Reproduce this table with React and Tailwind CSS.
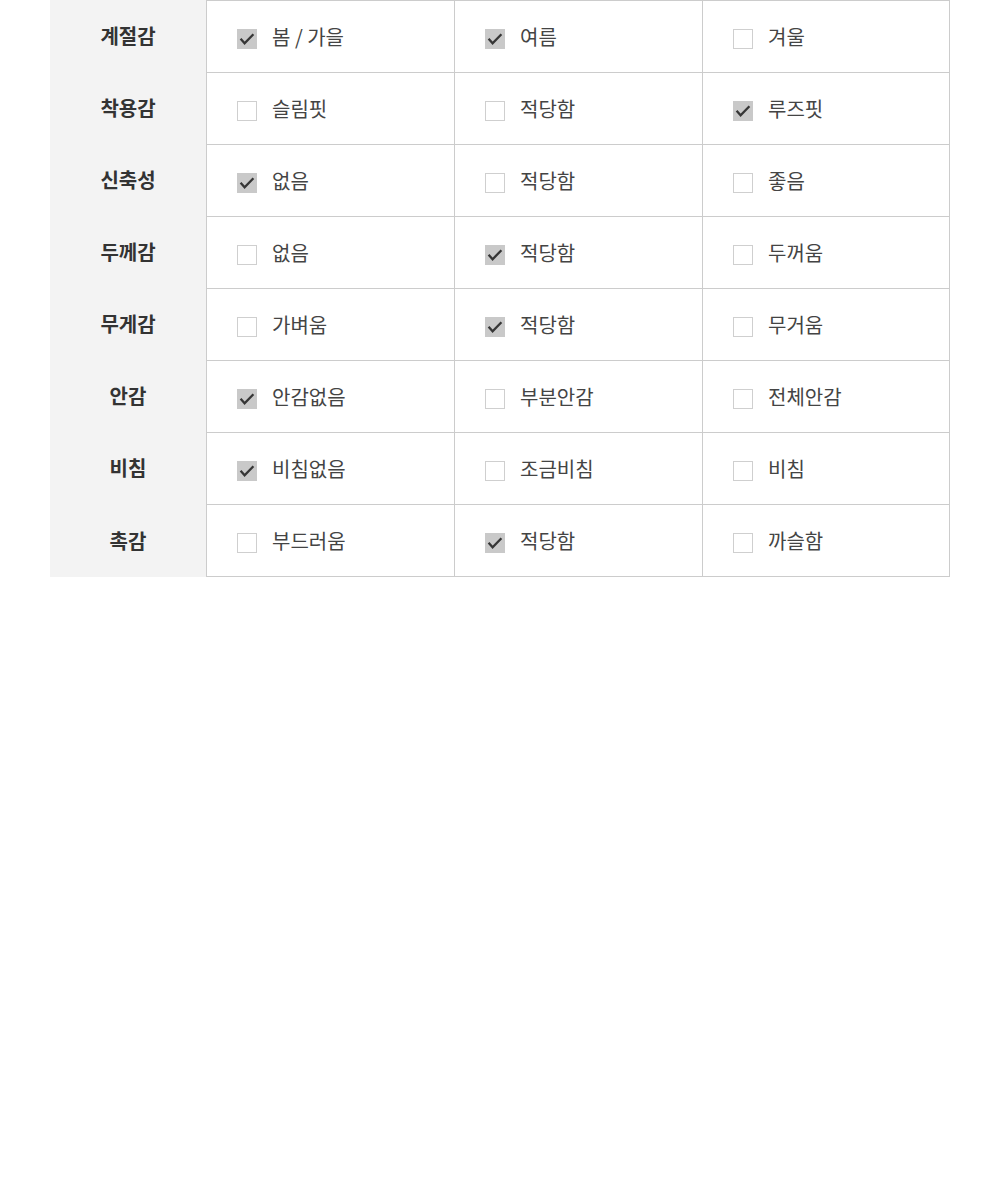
import React from "react";

const rows = [
  { label: "계절감", opts: ["봄 / 가을", "여름", "겨울"], checked: [0, 1] },
  { label: "착용감", opts: ["슬림핏", "적당함", "루즈핏"], checked: [2] },
  { label: "신축성", opts: ["없음", "적당함", "좋음"], checked: [0] },
  { label: "두께감", opts: ["없음", "적당함", "두꺼움"], checked: [1] },
  { label: "무게감", opts: ["가벼움", "적당함", "무거움"], checked: [1] },
  { label: "안감", opts: ["안감없음", "부분안감", "전체안감"], checked: [0] },
  { label: "비침", opts: ["비침없음", "조금비침", "비침"], checked: [0] },
  { label: "촉감", opts: ["부드러움", "적당함", "까슬함"], checked: [1] },
];

const Box = ({ on }) =>
  on ? (
    <div className="w-5 h-5 bg-[#c9c9c9] shrink-0">
      <svg width="20" height="20" viewBox="0 0 20 20" fill="none">
        <path d="M3.6 9.8 L7.6 14.2 L16.4 5.2" stroke="#363636" strokeWidth="2.3" />
      </svg>
    </div>
  ) : (
    <div className="w-5 h-5 border border-[#cfcfcf] bg-white shrink-0"></div>
  );

const App = () => {
  return (
    <div
      className="min-h-[1177px] bg-white"
      style={{ fontFamily: '"Noto Sans CJK KR", "Noto Sans", sans-serif' }}
    >
      <div className="ml-[50px] w-[900px] grid grid-cols-[156px_248px_248px_248px]">
        {rows.map((r, i) => {
          const last = i === rows.length - 1;
          return (
            <React.Fragment key={r.label}>
              <div
                className={`bg-[#f3f3f3] flex items-center justify-center text-[20px] font-bold text-[#333] ${
                  last ? "h-[73px]" : "h-[72px]"
                }`}
              >
                {r.label}
              </div>
              {r.opts.map((o, j) => (
                <div
                  key={o + j}
                  className={`border-t border-l border-[#cccccc] flex items-center pl-[30px] gap-[15px] ${
                    j === 2 ? "border-r" : ""
                  } ${last ? "h-[73px] border-b" : "h-[72px]"}`}
                >
                  <div className="mt-[5px]">
                    <Box on={r.checked.includes(j)} />
                  </div>
                  <span className="text-[20px] text-[#444]">{o}</span>
                </div>
              ))}
            </React.Fragment>
          );
        })}
      </div>
    </div>
  );
};

export default App;
